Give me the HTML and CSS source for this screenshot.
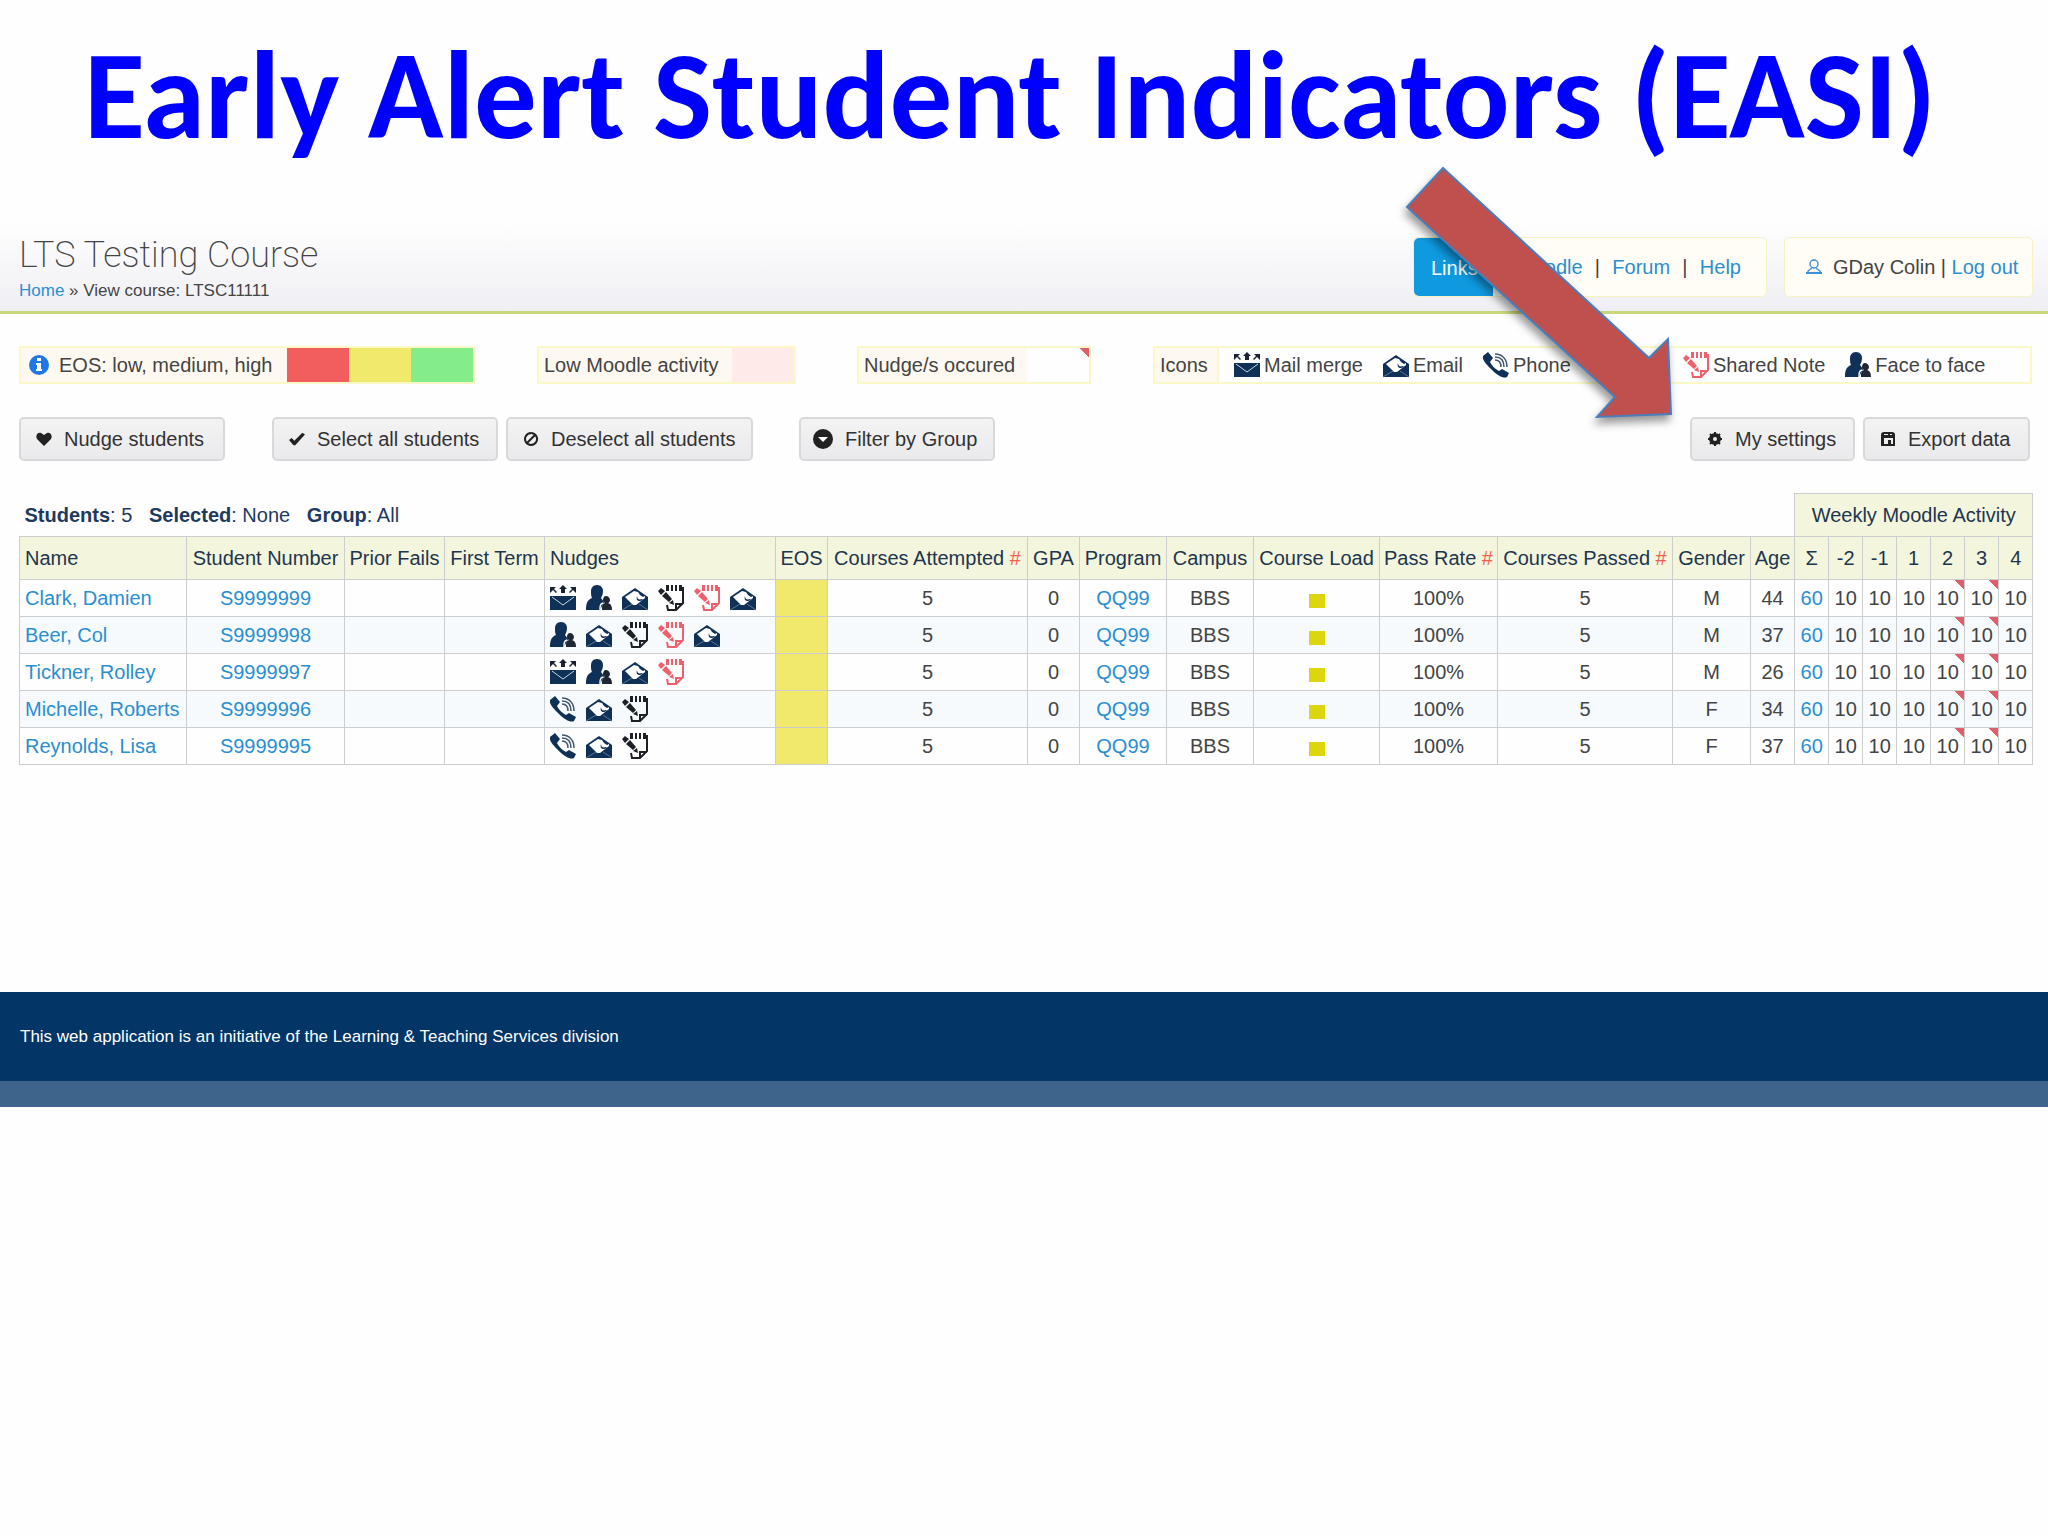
FILE: index.html
```
<!DOCTYPE html>
<html lang="en">
<head>
  <meta charset="UTF-8">
  <meta name="viewport" content="width=device-width, initial-scale=1.0">
  <title>Early Alert Student Indicators (EASI)</title>
  <link rel="stylesheet" href="styles.css">
</head>
<body>
  <!-- icon set -->
  <svg class="icon-defs" aria-hidden="true">
    <symbol id="i-merge" viewBox="0 0 26 26">
      <path d="M0 2h6l-2 2 3 3-1 1-3-3-3 3zM26 2h-6l2 2-3 3 1 1 3-3 3 3zM13 0l4 4h-2v4h-4V4H9z" fill="#1b2230"/>
      <path d="M0 11h26v14H0z"/>
      <path d="M2 12l11 8 11-8" fill="none" stroke="#c9d3df" stroke-width="1"/>
    </symbol>
    <symbol id="i-email" viewBox="0 0 26 26">
      <path d="M0 12L13 3l13 9v13H0z"/>
      <path d="M3 12l9-6 4 1 2 3 3 2 2-1v2l-9 7h-3z" fill="#fff"/>
      <path d="M15 11c0 3 2 4 5 3l1 1-3 1c-3 0-4-2-3-5z"/>
      <path d="M0 25l10-6M26 25l-9-6" stroke="#5b7694" stroke-width="1" fill="none"/>
    </symbol>
    <symbol id="i-phone" viewBox="0 0 26 26">
      <path d="M0 4l5-4 5 6-3 4c2 4 5 7 9 9l3-2 7 4-2 4c-3 2-9-1-15-7S-1 8 0 4z"/>
      <path d="M12 8c4 0 6 3 6 7M12 5c6 0 9 4 9 10M12 2c8 0 12 6 12 13" fill="none" stroke="#42566d" stroke-width="1.5"/>
    </symbol>
    <symbol id="i-note" viewBox="0 0 26 26">
      <path d="M8 0h3v6H8zM13 0h2v6h-2zM17 0h2v6h-2zM21 0h3v6h-3z"/>
      <path d="M24 3h1v15l-7 7H10l-1-5M18 25v-6h7" fill="none" stroke="currentColor" stroke-width="2"/>
      <path d="M0 6l3-3 4 3-4 4zM4 11l4-4 6 7-3 3zM11 18l4-3 1 5z"/>
    </symbol>
    <symbol id="i-face" viewBox="0 0 26 26">
      <path d="M11 0c4 0 6 3 6 6s-1 5-2 7l3 4-4 8H0c0-6 1-10 6-12C5 11 5 9 5 6s2-6 6-6z"/>
      <path d="M16 25c0-4 0-6 3-7-2-1-2-2-2-3 0-2 1-4 3-4s4 2 4 4c0 1-1 3-2 3 3 1 4 3 4 7z" fill="#1f2733"/>
      <path d="M14 25c0-4 0-6 3-7" fill="none" stroke="#fff" stroke-width="1.4"/>
    </symbol>
    <symbol id="i-info" viewBox="0 0 20 20">
      <circle cx="10" cy="10" r="10" fill="#2176e8"/>
      <path d="M8 3h4v3H8zM7 8h5v6h1v2H7v-2h1v-4H7z" fill="#fff"/>
    </symbol>
    <symbol id="i-heart" viewBox="0 0 16 16">
      <path d="M8 15L1 8c-2-4 1-7 4-6l3 2 3-2c3-1 6 2 4 6z"/>
    </symbol>
    <symbol id="i-check" viewBox="0 0 18 16">
      <path d="M0 9l3-2 3 3 9-9 3 2L7 15H5z"/>
    </symbol>
    <symbol id="i-ban" viewBox="0 0 16 16">
      <path d="M8 2a6 6 0 1 0 .1 0M4 12l8-8" fill="none" stroke="currentColor" stroke-width="2"/>
    </symbol>
    <symbol id="i-down" viewBox="0 0 20 20">
      <circle cx="10" cy="10" r="10"/>
      <path d="M5 8h10l-5 5z" fill="#fff"/>
    </symbol>
    <symbol id="i-gear" viewBox="0 0 16 16">
      <circle cx="8" cy="8" r="4" fill="none" stroke="currentColor" stroke-width="4"/>
      <path d="M8 1v4M8 11v4M1 8h4M11 8h4M3 3l3 3M10 10l3 3M13 3l-3 3M6 10l-3 3" stroke="currentColor" stroke-width="2"/>
    </symbol>
    <symbol id="i-disk" viewBox="0 0 16 16">
      <path d="M4 1h8a3 3 0 0 1 3 3v11H1V4a3 3 0 0 1 3-3z"/>
      <path d="M4 3h4v1H4zM10 3h2v1h-2zM4 7h9v6H4z" fill="#eee"/>
      <path d="M8 9h3v4H8z"/>
    </symbol>
    <symbol id="i-user" viewBox="0 0 16 16">
      <circle cx="8" cy="5" r="4" fill="none" stroke="currentColor" stroke-width="1.4"/>
      <path d="M6 9l-4 3v2h12v-2l-4-3" fill="none" stroke="currentColor" stroke-width="1.4"/>
      <path d="M0 13h16v2H0z"/>
    </symbol>
  </svg>

  <h1 class="slide-title">Early Alert Student Indicators (EASI)</h1>

  <header class="header">
    <div>
      <h2>LTS Testing Course</h2>
      <p class="breadcrumb"><a href="#">Home</a> » View course: LTSC11111</p>
    </div>
    <div class="header-nav">
      <nav class="links">
        <span class="links-tab">Links</span>
        <span class="links-list"><a href="#">Moodle</a><span>|</span><a href="#">Forum</a><span>|</span><a href="#">Help</a></span>
      </nav>
      <div class="user">
        <svg class="icon-user"><use href="#i-user"/></svg>
        <span>GDay Colin | <a href="#">Log out</a></span>
      </div>
    </div>
  </header>

  <main>
    <div class="legend">
      <div class="legend-box eos">
        <span class="legend-label"><svg class="icon-info"><use href="#i-info"/></svg>EOS: low, medium, high</span>
        <span class="swatch low"></span>
        <span class="swatch medium"></span>
        <span class="swatch high"></span>
      </div>
      <div class="legend-box activity">
        <span class="legend-label">Low Moodle activity</span>
        <span class="swatch inactive"></span>
      </div>
      <div class="legend-box occured">
        <span class="legend-label">Nudge/s occured</span>
        <span class="swatch flag"></span>
      </div>
      <div class="legend-box icons">
        <span class="legend-label">Icons</span>
        <ul>
          <li><svg class="icon"><use href="#i-merge"/></svg>Mail merge</li>
          <li><svg class="icon"><use href="#i-email"/></svg>Email</li>
          <li><svg class="icon"><use href="#i-phone"/></svg>Phone</li>
          <li><svg class="icon black"><use href="#i-note"/></svg>Note</li>
          <li><svg class="icon red"><use href="#i-note"/></svg>Shared Note</li>
          <li><svg class="icon"><use href="#i-face"/></svg>Face to face</li>
        </ul>
      </div>
    </div>

    <div class="toolbar">
      <button class="nudge"><svg><use href="#i-heart"/></svg>Nudge students</button>
      <div class="select-buttons">
        <button class="select"><svg><use href="#i-check"/></svg>Select all students</button>
        <button class="deselect"><svg><use href="#i-ban"/></svg>Deselect all students</button>
      </div>
      <button class="filter"><svg><use href="#i-down"/></svg>Filter by Group</button>
      <div class="right-buttons">
        <button class="settings"><svg><use href="#i-gear"/></svg>My settings</button>
        <button class="export"><svg><use href="#i-disk"/></svg>Export data</button>
      </div>
    </div>

    <table class="students">
      <colgroup>
        <col class="c-name"><col class="c-number"><col class="c-fails"><col class="c-fails"><col class="c-nudges">
        <col class="c-small"><col class="c-attempted"><col class="c-small"><col class="c-program"><col class="c-program">
        <col class="c-load"><col class="c-rate"><col class="c-passed"><col class="c-gender"><col class="c-age">
        <col class="c-week"><col class="c-week"><col class="c-week"><col class="c-week"><col class="c-week"><col class="c-week"><col class="c-week">
      </colgroup>
      <thead>
        <tr class="summary">
          <td colspan="15"><b>Students</b>: 5 &nbsp; <b>Selected</b>: None &nbsp; <b>Group</b>: All</td>
          <th colspan="7">Weekly Moodle Activity</th>
        </tr>
        <tr>
          <th class="left">Name</th><th>Student Number</th><th>Prior Fails</th><th>First Term</th><th class="left">Nudges</th>
          <th>EOS</th><th>Courses Attempted <i>#</i></th><th>GPA</th><th>Program</th><th>Campus</th>
          <th>Course Load</th><th>Pass Rate <i>#</i></th><th>Courses Passed <i>#</i></th><th>Gender</th><th>Age</th>
          <th>Σ</th><th>-2</th><th>-1</th><th>1</th><th>2</th><th>3</th><th>4</th>
        </tr>
      </thead>
      <tbody>
        <tr>
          <td class="left"><a href="#">Clark, Damien</a></td><td><a href="#">S9999999</a></td><td></td><td></td>
          <td><div class="nudge-icons">
            <svg class="icon"><use href="#i-merge"/></svg>
            <svg class="icon"><use href="#i-face"/></svg>
            <svg class="icon"><use href="#i-email"/></svg>
            <svg class="icon black"><use href="#i-note"/></svg>
            <svg class="icon red"><use href="#i-note"/></svg>
            <svg class="icon"><use href="#i-email"/></svg>
          </div></td>
          <td class="medium"></td><td>5</td><td>0</td><td><a href="#">QQ99</a></td><td>BBS</td>
          <td><span class="load"></span></td><td>100%</td><td>5</td><td>M</td><td>44</td>
          <td><a href="#">60</a></td><td>10</td><td>10</td><td>10</td><td class="flag">10</td><td class="flag">10</td><td>10</td>
        </tr>
        <tr>
          <td class="left"><a href="#">Beer, Col</a></td><td><a href="#">S9999998</a></td><td></td><td></td>
          <td><div class="nudge-icons">
            <svg class="icon"><use href="#i-face"/></svg>
            <svg class="icon"><use href="#i-email"/></svg>
            <svg class="icon black"><use href="#i-note"/></svg>
            <svg class="icon red"><use href="#i-note"/></svg>
            <svg class="icon"><use href="#i-email"/></svg>
          </div></td>
          <td class="medium"></td><td>5</td><td>0</td><td><a href="#">QQ99</a></td><td>BBS</td>
          <td><span class="load"></span></td><td>100%</td><td>5</td><td>M</td><td>37</td>
          <td><a href="#">60</a></td><td>10</td><td>10</td><td>10</td><td class="flag">10</td><td class="flag">10</td><td>10</td>
        </tr>
        <tr>
          <td class="left"><a href="#">Tickner, Rolley</a></td><td><a href="#">S9999997</a></td><td></td><td></td>
          <td><div class="nudge-icons">
            <svg class="icon"><use href="#i-merge"/></svg>
            <svg class="icon"><use href="#i-face"/></svg>
            <svg class="icon"><use href="#i-email"/></svg>
            <svg class="icon red"><use href="#i-note"/></svg>
          </div></td>
          <td class="medium"></td><td>5</td><td>0</td><td><a href="#">QQ99</a></td><td>BBS</td>
          <td><span class="load"></span></td><td>100%</td><td>5</td><td>M</td><td>26</td>
          <td><a href="#">60</a></td><td>10</td><td>10</td><td>10</td><td class="flag">10</td><td class="flag">10</td><td>10</td>
        </tr>
        <tr>
          <td class="left"><a href="#">Michelle, Roberts</a></td><td><a href="#">S9999996</a></td><td></td><td></td>
          <td><div class="nudge-icons">
            <svg class="icon"><use href="#i-phone"/></svg>
            <svg class="icon"><use href="#i-email"/></svg>
            <svg class="icon black"><use href="#i-note"/></svg>
          </div></td>
          <td class="medium"></td><td>5</td><td>0</td><td><a href="#">QQ99</a></td><td>BBS</td>
          <td><span class="load"></span></td><td>100%</td><td>5</td><td>F</td><td>34</td>
          <td><a href="#">60</a></td><td>10</td><td>10</td><td>10</td><td class="flag">10</td><td class="flag">10</td><td>10</td>
        </tr>
        <tr>
          <td class="left"><a href="#">Reynolds, Lisa</a></td><td><a href="#">S9999995</a></td><td></td><td></td>
          <td><div class="nudge-icons">
            <svg class="icon"><use href="#i-phone"/></svg>
            <svg class="icon"><use href="#i-email"/></svg>
            <svg class="icon black"><use href="#i-note"/></svg>
          </div></td>
          <td class="medium"></td><td>5</td><td>0</td><td><a href="#">QQ99</a></td><td>BBS</td>
          <td><span class="load"></span></td><td>100%</td><td>5</td><td>F</td><td>37</td>
          <td><a href="#">60</a></td><td>10</td><td>10</td><td>10</td><td class="flag">10</td><td class="flag">10</td><td>10</td>
        </tr>
      </tbody>
    </table>
  </main>

  <footer>This web application is an initiative of the Learning &amp; Teaching Services division</footer>

  <!-- points at My settings -->
  <svg class="arrow" viewBox="0 0 280 270" aria-hidden="true">
    <path d="M43 8L249 198l19-19 3 75-74 3 18-20L7 47z"/>
  </svg>
</body>
</html>
```
FILE: styles.css
```
* {
  box-sizing: border-box;
}
body {
  margin: 0;
  position: relative;
  background: #fefefe;
  color: #444;
  font-family: "Liberation Sans", Arial, sans-serif;
  font-size: 20px;
  line-height: 24px;
}
a {
  color: #2a8fd0;
  text-decoration: none;
}
svg {
  fill: currentColor;
  flex: none;
}
.icon-defs {
  position: absolute;
  width: 0;
  height: 0;
}
.slide-title {
  margin: 0;
  padding: 26px 0 56px 84px;
  color: #0000ff;
  font-family: Carlito, Lato, sans-serif;
  font-size: 125px;
  font-weight: bold;
  line-height: 140px;
  white-space: nowrap;
}

/* header */
.header {
  display: flex;
  justify-content: space-between;
  height: 92px;
  padding: 15px 15px 0 19px;
  background: linear-gradient(#fefefe, #efeff4);
  border-bottom: 3px solid #c9d877;
}
.header h2 {
  margin: 0;
  font-family: Roboto, "Liberation Sans", sans-serif;
  font-size: 36px;
  font-weight: 200;
  line-height: 36px;
}
.breadcrumb {
  margin: 8px 0 0;
  font-size: 17px;
  line-height: 20px;
}
.header-nav {
  display: flex;
  gap: 17px;
}
.links, .user {
  display: flex;
  align-items: center;
  height: 60px;
  background: #fffdf5;
  border: 1px solid #f5f2c4;
  border-radius: 5px;
}
.links {
  width: 354px;
}
.links-tab {
  align-self: stretch;
  width: 79px;
  padding: 18px 0 0 17px;
  background: #0f9ae0;
  border-radius: 5px 0 0 5px;
  color: #fff;
}
.links-list {
  display: flex;
  flex: 1;
  justify-content: space-between;
  padding: 0 25px 0 24px;
}
.user {
  width: 249px;
  padding-left: 21px;
  gap: 11px;
  white-space: nowrap;
}
.icon-user {
  width: 16px;
  height: 16px;
  color: #3f8fd6;
}

main {
  padding: 32px 16px 0 19px;
}

/* legend */
.legend {
  display: flex;
}
.legend-box {
  display: flex;
  height: 38px;
  border: 2px solid #fbf8c8;
  white-space: nowrap;
}
.legend-label {
  display: flex;
  align-items: center;
  flex: 1;
  padding-left: 5px;
  background: #fef9f0;
}
.eos {
  width: 456px;
  margin-right: 62px;
}
.eos .legend-label {
  padding-left: 8px;
  gap: 10px;
}
.activity {
  width: 259px;
  margin-right: 61px;
}
.occured {
  width: 234px;
  margin-right: 62px;
}
.icons {
  flex: 1;
}
.icons .legend-label {
  flex: none;
  width: 64px;
  border-right: 2px solid #fbf8c8;
}
.icon-info {
  width: 20px;
  height: 20px;
}
.swatch {
  width: 62px;
}
.low {
  background: #f25e5e;
}
.medium {
  background: #f1e96c;
}
.high {
  background: #84ec88;
}
.inactive {
  background: #ffeaea;
}
.flag {
  background: linear-gradient(to bottom left, #dc5f6b 50%, transparent 50%) no-repeat top right / 9px 10px;
}
.icons ul {
  display: flex;
  align-items: center;
  gap: 20px;
  margin: 0;
  padding: 0 0 0 15px;
  list-style: none;
}
.icons li {
  display: flex;
  align-items: center;
  gap: 4px;
}
.icon {
  width: 26px;
  height: 26px;
  color: #0f3157;
}
.black {
  color: #1d2026;
}
.red {
  color: #ef5f6c;
}

/* buttons */
.toolbar {
  display: flex;
  margin: 33px 2px 0 0;
}
.toolbar button {
  display: flex;
  align-items: center;
  gap: 12px;
  height: 44px;
  padding: 0 0 0 15px;
  background: linear-gradient(#f3f3f4, #eaeaec);
  border: 2px solid #d9d9dc;
  border-radius: 5px;
  color: #333;
  font: inherit;
  white-space: nowrap;
}
.toolbar svg {
  width: 16px;
  height: 16px;
  color: #222;
}
.select-buttons, .right-buttons {
  display: flex;
  gap: 8px;
}
.right-buttons {
  margin-left: auto;
}
.toolbar .nudge {
  width: 206px;
  margin-right: 47px;
}
.select {
  width: 226px;
}
.deselect {
  width: 247px;
}
.toolbar .filter {
  width: 196px;
  margin-left: 46px;
  padding-left: 12px;
}
.toolbar .filter svg {
  width: 20px;
  height: 20px;
}
.settings {
  width: 165px;
}
.export {
  width: 167px;
}

/* student table */
.students {
  width: 100%;
  margin-top: 32px;
  border-collapse: collapse;
  table-layout: fixed;
  text-align: center;
  white-space: nowrap;
}
.students th, .students td {
  height: 37px;
  padding: 0;
  border: 1px solid #cbcdcf;
}
.students th {
  height: 43px;
  background: #f3f6dc;
  color: #22354f;
  font-weight: normal;
}
.students th i {
  color: #f4604f;
  font-style: normal;
}
.students .left {
  padding-left: 5px;
  text-align: left;
}
.students .summary td {
  padding-left: 5px;
  border-width: 0 0 1px;
  color: #1f3a5f;
  text-align: left;
}
.students tbody tr:nth-child(even) {
  background: #f7fafd;
}
.nudge-icons {
  display: flex;
  gap: 10px;
  padding-left: 5px;
}
.load {
  display: inline-block;
  width: 16px;
  height: 14px;
  background: #ddd60e;
  vertical-align: -3px;
}
.c-name { width: 167px; }
.c-number { width: 158px; }
.c-fails { width: 100px; }
.c-nudges { width: 231px; }
.c-small { width: 52px; }
.c-attempted { width: 200px; }
.c-program { width: 87px; }
.c-load { width: 126px; }
.c-rate { width: 118px; }
.c-passed { width: 175px; }
.c-gender { width: 78px; }
.c-age { width: 44px; }
.c-week { width: 34px; }

footer {
  height: 115px;
  margin-top: 227px;
  padding: 33px 20px 0;
  background: #033566;
  border-bottom: 26px solid #3e648b;
  color: #fff;
  font-size: 17px;
}

.arrow {
  position: absolute;
  top: 160px;
  right: 368px;
  width: 280px;
  height: 270px;
  fill: #c0504d;
  stroke: #4a7ebb;
  stroke-width: 2;
  filter: drop-shadow(-2px 6px 4px rgba(0, 0, 0, 0.4));
}
```
